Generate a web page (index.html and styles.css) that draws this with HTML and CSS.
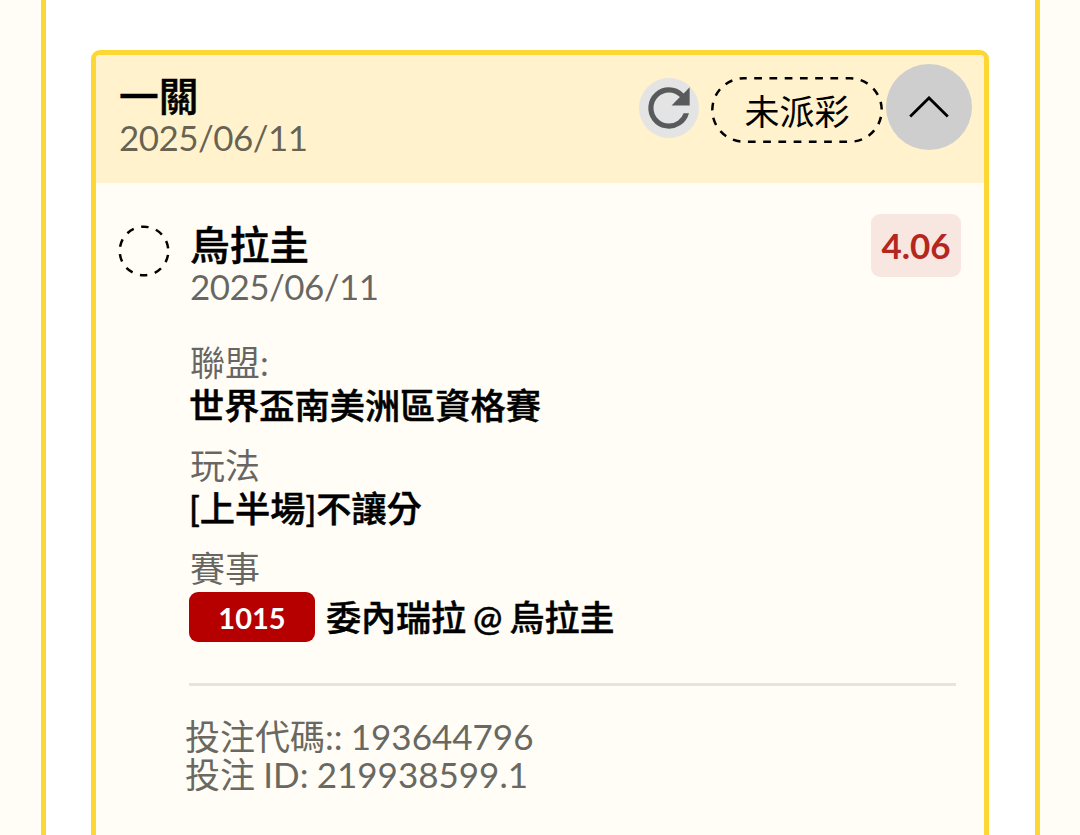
FILE: index.html
```html
<!DOCTYPE html>
<html lang="zh-Hant">
<head>
    <meta charset="UTF-8">
    <meta name="viewport" content="width=device-width, initial-scale=1.0">
    <title>投注紀錄</title>
    <link rel="stylesheet" href="styles.css">
</head>
<body>
    <main class="panel">
        <section class="card">
            <header class="card-header">
                <div class="heading">
                    <h2>一關</h2>
                    <p class="date">2025/06/11</p>
                </div>
                <div class="actions">
                    <button class="refresh" aria-label="重新整理">
                        <svg viewBox="0 0 24 24" width="62" height="62">
                            <path d="M17.65 6.35A7.958 7.958 0 0 0 12 4a8 8 0 1 0 7.73 10h-2.08A5.99 5.99 0 0 1 12 18a6 6 0 1 1 0-12c1.66 0 3.14.69 4.22 1.78L13 11h7V4z" fill="#585a5b"/>
                        </svg>
                    </button>
                    <span class="status">
                        <svg class="status-outline" width="172" height="66">
                            <rect x="1.3" y="1.3" width="169.4" height="63.4" rx="31.7"/>
                        </svg>
                        未派彩
                    </span>
                    <button class="toggle" aria-label="收合">
                        <svg viewBox="0 0 40 22" width="40" height="22">
                            <path d="M1.2 20.5 20 1.9l18.8 18.6" fill="none" stroke="#000" stroke-width="2.8"/>
                        </svg>
                    </button>
                </div>
            </header>
            <div class="bet">
                <svg class="pending" width="52" height="52">
                    <circle cx="26" cy="26" r="24.3"/>
                </svg>
                <div class="details">
                    <div class="bet-top">
                        <div class="heading">
                            <h2>烏拉圭</h2>
                            <p class="date">2025/06/11</p>
                        </div>
                        <span class="odds">4.06</span>
                    </div>
                    <dl class="info">
                        <dt>聯盟:</dt>
                        <dd>世界盃南美洲區資格賽</dd>
                        <dt>玩法</dt>
                        <dd>[上半場]不讓分</dd>
                        <dt>賽事</dt>
                        <dd class="match"><span class="code">1015</span>委內瑞拉 @ 烏拉圭</dd>
                    </dl>
                    <hr>
                    <div class="ids">
                        <p>投注代碼:: 193644796</p>
                        <p>投注 ID: 219938599.1</p>
                    </div>
                </div>
            </div>
        </section>
    </main>
</body>
</html>
```
FILE: styles.css
```css
* {
    box-sizing: border-box;
}
body {
    margin: 0;
    height: 100vh;
    overflow: hidden;
    background-color: #fffdf5;
    font-family: Lato, "Noto Sans CJK TC", sans-serif;
    font-size: 35px;
    color: #000;
}
h2, p, dl, dd {
    margin: 0;
}
button {
    border: none;
    padding: 0;
    border-radius: 50%;
    display: flex;
    align-items: center;
    justify-content: center;
    flex-shrink: 0;
}
.panel {
    height: 100%;
    margin: 0 40px 0 41px;
    padding: 50px 46px 0 45px;
    background-color: #fff;
    border: solid #fdd835;
    border-width: 0 5px;
}
.card {
    height: 820px;
    border: 5px solid #fdd835;
    border-radius: 9px;
    background-color: #fffdf5;
    overflow: hidden;
}
.card-header {
    display: flex;
    justify-content: space-between;
    height: 128px;
    padding: 9px 12px 0 23px;
    background-color: #fff2cc;
}
.heading h2 {
    font-size: 39.7px;
    font-weight: 500;
    line-height: 41px;
    -webkit-text-stroke: 0.5px;
}
.heading .date {
    line-height: 43px;
    letter-spacing: -0.55px;
    color: rgba(0, 0, 0, 0.6);
}
.card-header .heading {
    padding-top: 11px;
}
.actions {
    display: flex;
    align-items: center;
    height: 86px;
}
.refresh {
    width: 60px;
    height: 60px;
    margin: 1px 12px 0 0;
    background-color: #e4e4e4;
}
.refresh svg {
    flex-shrink: 0;
}
.status {
    position: relative;
    width: 172px;
    height: 66px;
    margin: 7px 3px 0 0;
    line-height: 66px;
    text-align: center;
}
.status-outline {
    position: absolute;
    top: -1px;
    left: 0;
}
.status-outline rect,
.pending circle {
    fill: none;
    stroke: #000;
    stroke-width: 2.5;
}
.status-outline rect {
    stroke-dasharray: 7.7 7.54;
    stroke-dashoffset: 5;
}
.toggle {
    width: 86px;
    height: 86px;
    background-color: #cecece;
}
.bet {
    display: flex;
    padding: 31px 23px 0 22px;
}
.pending {
    flex-shrink: 0;
    margin: 11px 19px 0 0;
}
.pending circle {
    stroke-dasharray: 7.6 7.67;
    stroke-dashoffset: -34.5;
}
.details {
    flex: 1;
}
.bet-top {
    display: flex;
    justify-content: space-between;
}
.bet-top .heading {
    padding: 10px 0 0 1px;
}
.odds {
    width: 90px;
    height: 63px;
    border-radius: 9px;
    background-color: #f8e7e1;
    color: #b5261e;
    font-weight: 700;
    line-height: 63px;
    text-align: center;
}
.info {
    padding-top: 33px;
}
.info dt {
    padding-left: 1px;
    line-height: 43px;
    color: rgba(0, 0, 0, 0.6);
}
.info dd {
    margin-bottom: 17px;
    font-size: 35.2px;
    font-weight: 500;
    line-height: 43px;
    -webkit-text-stroke: 0.5px;
}
.info .match {
    display: flex;
    align-items: center;
    height: 50px;
    margin: 2px 0 41px;
    font-size: 35px;
    word-spacing: -1.8px;
}
.code {
    width: 126px;
    height: 50px;
    margin-right: 11px;
    border-radius: 9px;
    background-color: #b60000;
    color: #fff;
    font-size: 29px;
    font-weight: 700;
    line-height: 51px;
    text-align: center;
    -webkit-text-stroke: 0;
}
hr {
    height: 3px;
    margin: 0 5px 31px 0;
    border: none;
    background-color: #e6e4dc;
}
.ids {
    margin-left: -4px;
    line-height: 38px;
    word-spacing: -0.7px;
    color: #696862;
}
```
